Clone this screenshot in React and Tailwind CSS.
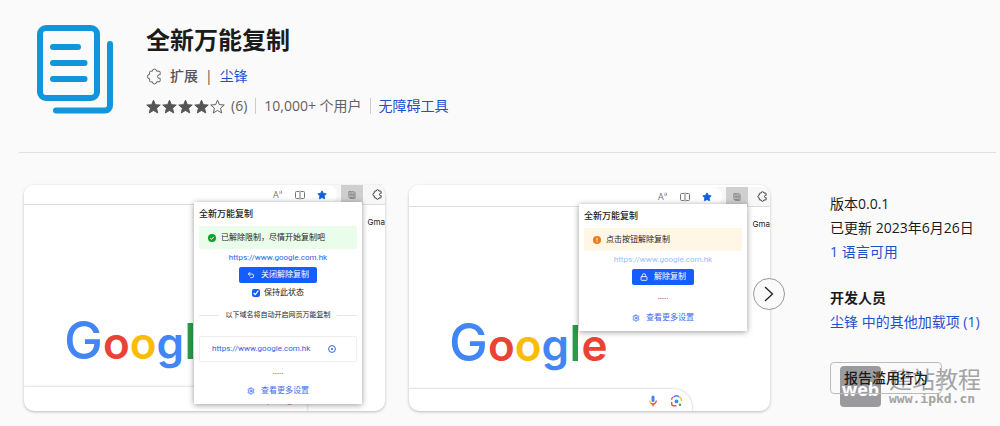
import { useState } from "react";
import { Star, Undo2, Lock, Settings } from "lucide-react";

const PuzzleIcon = ({ className, strokeWidth = 1.5 }) => (
  <svg className={className} viewBox="0 0 24 24" fill="none" stroke="currentColor" strokeWidth={strokeWidth} strokeLinejoin="round">
    <path d="M9 4.500a3 3 0 0 1 6 0h3.500A1.500 1.500 0 0 1 20 6v3.500h-1.200a2.500 2.500 0 0 0 0 5H20V18a1.500 1.500 0 0 1-1.500 1.500H15a3 3 0 0 1-6 0H6.500A1.500 1.500 0 0 1 5 18v-3a3 3 0 0 1 0-6V6a1.500 1.500 0 0 1 1.500-1.500z" />
  </svg>
);

// Two stacked pages, used for the big logo and the small toolbar button
const PagesIcon = ({ className }) => (
  <svg className={className} viewBox="0 0 77 90" fill="none" stroke="currentColor" strokeWidth="6" strokeLinecap="round">
    <rect x="3" y="3" width="57" height="70" rx="6" />
    <path d="M16 22H41M16 38H47.500M16 54H47.500" />
    <path d="M73 19V80a5 5 0 0 1-5 5.500H19" />
  </svg>
);

const SplitIcon = () => (
  <svg className="size-2.5" viewBox="0 0 10 10" fill="none" stroke="currentColor">
    <path d="M4 1.500H1.500a1 1 0 0 0-1 1v5a1 1 0 0 0 1 1H4M6 1.500h2.500a1 1 0 0 1 1 1v5a1 1 0 0 1-1 1H6M5 0.500v9" />
  </svg>
);

const TargetIcon = () => (
  <svg className="size-2" viewBox="0 0 8 8" fill="none" stroke="currentColor">
    <circle cx="4" cy="4" r="3.400" />
    <path d="M3.200 3.200l1.600 1.600M4.800 3.200L3.200 4.800" />
  </svg>
);

const MicIcon = () => (
  <svg className="h-3 w-2" viewBox="0 0 8 12" fill="none">
    <rect x="2.500" y="0.500" width="3" height="6.500" rx="1.500" fill="#4285f4" />
    <path d="M0.700 5.500A3.300 3.300 0 0 0 2 8.300" stroke="#fbbc04" strokeWidth="1.200" />
    <path d="M2 8.300A3.300 3.300 0 0 0 7.300 5.500" stroke="#ea4335" strokeWidth="1.200" />
    <path d="M4 9v2.500" stroke="#ea4335" strokeWidth="1.200" />
  </svg>
);

const LensIcon = () => (
  <svg className="h-3 w-[11px]" viewBox="0 0 11 12" fill="none" strokeWidth="1.300">
    <path d="M0.700 4.800V4A2 2 0 0 1 2.500 2.200" stroke="#ea4335" />
    <path d="M3 2.200L4 1h3l1 1.200" stroke="#4285f4" />
    <path d="M8 2.200A2.200 2.200 0 0 1 10.300 4.500V6" stroke="#fbbc04" />
    <path d="M0.700 7v1.800A2 2 0 0 0 2.700 10.800H5.500" stroke="#ea4335" />
    <circle cx="5.500" cy="6.400" r="1.900" fill="#4285f4" />
    <circle cx="9" cy="9.800" r="1.200" fill="#34a853" />
  </svg>
);

const ReadAloudIcon = () => (
  <span className="flex w-2.5 text-[9px] leading-[10px]">
    A
    <svg className="size-1" viewBox="0 0 4 4" fill="none" stroke="currentColor" strokeWidth="0.800">
      <path d="M0.500 1.500q1 1 0 2M1.800 0.500q2 1.500 0 3.500" />
    </svg>
  </span>
);

const BrowserToolbar = () => (
  <div className="flex h-5 items-stretch border-b border-[#dcdcdc] bg-[#f7f7f7] text-[#777]">
    <div className="mr-1 flex flex-1 items-center justify-end gap-3 rounded-r-full bg-white pr-2.5">
      <ReadAloudIcon />
      <SplitIcon />
      <Star className="size-2.5 text-[#0b62d6]" fill="currentColor" />
    </div>
    <div className="flex w-[22px] items-center justify-center bg-[#cfcfcf]">
      <PagesIcon className="size-2 stroke-9" />
    </div>
    <div className="flex w-[22px] items-center justify-center pl-1.5 text-[#333]">
      <PuzzleIcon className="size-[11px]" strokeWidth={2} />
    </div>
  </div>
);

const GoogleLogo = () => (
  <div className="pl-10 font-[Inter,sans-serif] text-[44px] leading-[50px] font-semibold">
    <span className="text-[52px] font-medium text-[#4285f4]">G</span>
    <span className="text-[#ea4335]">o</span>
    <span className="text-[#fbbc05]">o</span>
    <span className="text-[#4285f4]">g</span>
    <span className="text-[50px] font-medium text-[#2b9b47]">l</span>
    <span className="text-[#ea4335]">e</span>
  </div>
);

const Screenshot = ({ className, children }) => (
  <div className={`flex min-w-0 flex-1 flex-col overflow-hidden rounded-[10px] bg-white shadow-[0_1px_3px_rgba(0,0,0,0.25)] ${className}`}>
    <div className="relative flex flex-1 flex-col">
      <BrowserToolbar />
      <div className="mt-[11px] text-right font-[Inter,sans-serif] text-[8px] leading-3 text-[#222]">Gma</div>
      <div className="mt-[88px] mb-5 h-[50px]">
        <GoogleLogo />
      </div>
      <div className="flex min-h-[23px] w-[284px] flex-1 justify-end gap-3.5 rounded-tr-[20px] border-t border-r border-[#e8e8e8] pt-1.5 pr-2.5 shadow-[0_0_3px_rgba(0,0,0,0.08)]">
        <MicIcon />
        <LensIcon />
      </div>
      <div className="absolute top-[17px] right-[23px] flex w-[168px] flex-col bg-white px-[5px] pb-1 font-[Roboto,'Noto_Sans_CJK_SC',sans-serif] text-[8px] text-[#222] shadow-[0_1px_6px_rgba(0,0,0,0.4)]">
        <div className="text-[9px] leading-6 font-medium">全新万能复制</div>
        {children}
      </div>
    </div>
  </div>
);

const SettingsLink = () => (
  <a href="#settings" className="flex h-[18px] items-center justify-center gap-1.5 text-[#3f6df0]">
    <Settings className="size-2" strokeWidth={2.5} />
    查看更多设置
  </a>
);

export default function App() {
  const [keep, setKeep] = useState(true);

  return (
    <div className="min-h-screen bg-[#fafafa] font-['Open_Sans','Noto_Sans_CJK_SC',sans-serif] text-sm text-[#1b1b1b]">
      {/* Header */}
      <header className="mr-1 ml-[19px] flex gap-8 border-b border-[#e0e0e0] pt-6 pb-[34px] pl-[18px]">
        <PagesIcon className="mt-px h-[90px] w-[77px] shrink-0 text-[#1296db]" />
        <div>
          <h1 className="text-2xl leading-8 font-bold">全新万能复制</h1>
          <div className="mt-2 flex h-6 items-center text-[#555]">
            <PuzzleIcon className="mr-[7px] size-[17px]" strokeWidth={1.3} />
            <span className="font-medium">扩展</span>
            <span className="mx-[7px]">|</span>
            <a href="#author" className="text-[#1f4fcf]">尘锋</a>
          </div>
          <div className="mt-1.5 flex h-6 items-center text-[#616161]">
            <div className="mr-1.5 flex gap-px" role="img" aria-label="4 / 5">
              {[1, 2, 3, 4, 5].map((n) => (
                <svg key={n} className="size-[15px]" viewBox="0 0 24 24" fill={n < 5 ? "#555" : "none"} stroke="#555" strokeWidth="1.5" strokeLinejoin="round">
                  <path d="M12 1.800l3 7.200 7.800.6-5.900 5.100 1.800 7.600-6.700-4-6.700 4 1.800-7.600L1.200 9.600 9 9z" />
                </svg>
              ))}
            </div>
            <span>(6)</span>
            <span className="ml-2 border-l border-[#ccc] pl-2 leading-4">10,000+ 个用户</span>
            <span className="ml-2 border-l border-[#ccc] pl-2 leading-4">
              <a href="#category" className="text-[#1f4fcf]">无障碍工具</a>
            </span>
          </div>
        </div>
      </header>

      <main className="flex gap-[60px] pt-8 pr-4 pb-[15px] pl-6">
        {/* Gallery */}
        <div className="relative flex min-w-0 flex-1 gap-6">
          <Screenshot className="">
            <div className="flex h-[23px] items-center bg-[#eafdea] pl-[9px]">
              <svg className="mr-[5px] size-2" viewBox="0 0 8 8" fill="none">
                <circle cx="4" cy="4" r="4" fill="#12a02c" />
                <path d="M2.200 4.100l1.300 1.300 2.300-2.500" stroke="#fff" />
              </svg>
              已解除限制，尽情开始复制吧
            </div>
            <a href="#site" className="text-center leading-[18px] text-[#2f62d9]">https://www.google.com.hk</a>
            <button type="button" className="flex h-4 items-center gap-1.5 self-center rounded-xs bg-[#165dff] px-2 text-white">
              <Undo2 className="size-2" strokeWidth={2.5} />
              关闭解除复制
            </button>
            <label className="flex h-5 items-center justify-center gap-1">
              <input type="checkbox" checked={keep} onChange={(e) => setKeep(e.target.checked)} className="size-2 accent-[#165dff]" />
              保持此状态
            </label>
            <div className="flex h-6 items-center justify-between text-[7px]">
              <span className="h-px w-5 bg-[#e5e6eb]" />
              以下域名将自动开启网页万能复制
              <span className="h-px w-5 bg-[#e5e6eb]" />
            </div>
            <div className="mt-[9px] flex h-[26px] items-center justify-between rounded-xs border border-[#eeeef2] pr-5 pl-3 text-[#2f62d9]">
              <a href="#site">https://www.google.com.hk</a>
              <button type="button" aria-label="remove">
                <TargetIcon />
              </button>
            </div>
            <div className="text-center leading-5">.....</div>
            <SettingsLink />
          </Screenshot>

          <Screenshot className="pt-0.5">
            <div className="flex h-[23px] items-center bg-[#fff6e6] pl-[9px]">
              <svg className="mr-[5px] size-2" viewBox="0 0 8 8" fill="none">
                <circle cx="4" cy="4" r="4" fill="#f27a16" />
                <path d="M4 1.800v2.700M4 5.300v1" stroke="#fff" />
              </svg>
              点击按钮解除复制
            </div>
            <a href="#site" className="text-center leading-[18px] text-[#94bfff]">https://www.google.com.hk</a>
            <button type="button" className="flex h-4 items-center gap-1.5 self-center rounded-xs bg-[#165dff] px-2 text-white">
              <Lock className="size-2" strokeWidth={2.5} />
              解除复制
            </button>
            <div className="text-center leading-6">.....</div>
            <SettingsLink />
          </Screenshot>

          <button type="button" aria-label="next" className="absolute top-[93px] -right-[15px] flex size-8 items-center justify-center rounded-full border border-[#999] bg-[#fafafa]">
            <svg className="h-4 w-2.5" viewBox="0 0 10 16" fill="none" stroke="#222" strokeWidth="1.300">
              <path d="M1 1l7.500 7L1 15" />
            </svg>
          </button>
        </div>

        {/* Details */}
        <aside className="w-[154px] shrink-0 pt-[7px] leading-6 whitespace-nowrap">
          <div>版本0.0.1</div>
          <div>已更新 2023年6月26日</div>
          <a href="#languages" className="block text-[#1f4fcf]">1 语言可用</a>
          <h2 className="mt-[22px] font-bold">开发人员</h2>
          <a href="#more" className="block text-[#1f4fcf]">尘锋 中的其他加载项 (1)</a>
          <div className="relative mt-7">
            <div className="pointer-events-none absolute top-1 left-2.5 flex gap-2 text-[#a3a3a6]">
              <div className="flex size-[41px] items-center justify-center rounded-sm bg-[#9b9b9f] pt-1 text-lg font-bold text-white">web</div>
              <div>
                <div className="font-['Noto_Sans_CJK_SC',sans-serif] text-[23px] leading-6">建站教程</div>
                <div className="font-['DejaVu_Sans_Mono',monospace] text-[13px] leading-[18px] font-bold">www.ipkd.cn</div>
              </div>
            </div>
            <button type="button" className="relative h-8 w-28 rounded-sm border border-[#bbb] font-medium">报告滥用行为</button>
          </div>
        </aside>
      </main>
    </div>
  );
}
